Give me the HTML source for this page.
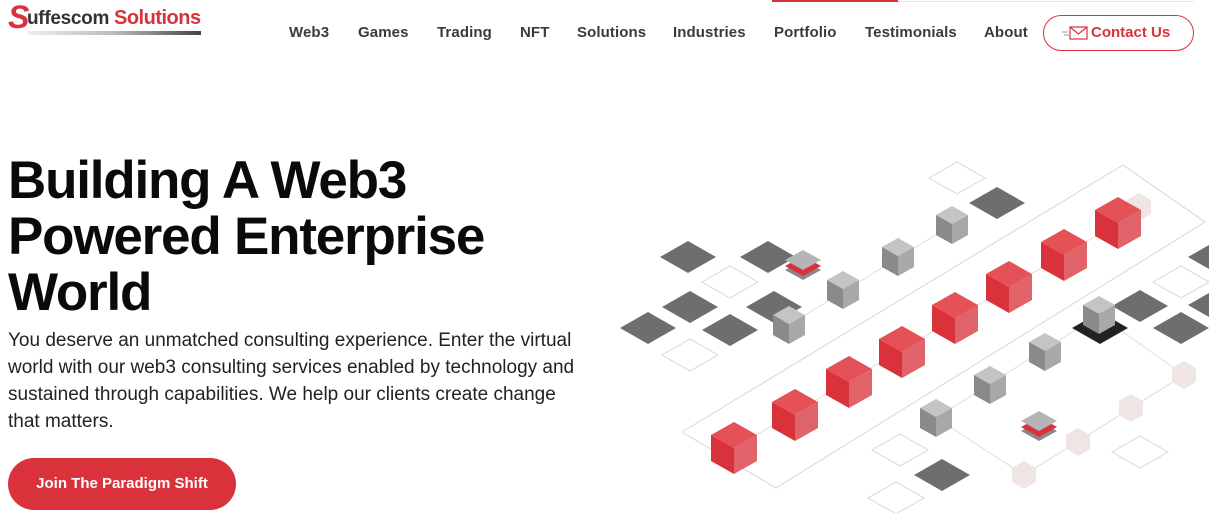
<!DOCTYPE html>
<html><head><meta charset="utf-8"><style>
*{margin:0;padding:0;box-sizing:border-box}
body{width:1209px;height:513px;overflow:hidden;background:#fff;font-family:"Liberation Sans",Arial,sans-serif;position:relative;color:#111}
.nav a{position:absolute;top:24px;font-size:15px;font-weight:bold;color:#3a3a3a;text-decoration:none;letter-spacing:0.1px}
h1{position:absolute;left:8px;top:153px;font-size:53px;line-height:56px;font-weight:bold;letter-spacing:-1.2px;color:#0a0a0a}
p{position:absolute;left:8px;top:327px;width:575px;font-size:19px;line-height:27px;color:#222}
.btn{position:absolute;left:8px;top:458px;width:228px;height:52px;border-radius:26px;background:#d9323b;color:#fff;font-weight:bold;font-size:15px;text-align:center;line-height:52px}
</style></head><body>
<div style="position:absolute;left:8px;top:2px;width:200px;height:36px">
<span style="position:absolute;left:0;top:-3px;font-size:32px;color:#d9323b;font-weight:bold;font-style:italic">S</span>
<span style="position:absolute;left:19px;top:6px;font-size:19px;color:#333;font-weight:bold;letter-spacing:-0.3px">uffescom</span>
<span style="position:absolute;left:106px;top:5px;font-size:20px;color:#d9323b;font-weight:bold;letter-spacing:-0.5px">Solutions</span>
<div style="position:absolute;left:20px;top:29px;width:173px;height:4px;background:linear-gradient(90deg,#eee,#bbb 50%,#444)"></div>
</div>
<div class="nav">
<a style="left:289px">Web3</a><a style="left:358px">Games</a><a style="left:437px">Trading</a><a style="left:520px">NFT</a><a style="left:577px">Solutions</a><a style="left:673px">Industries</a><a style="left:774px">Portfolio</a><a style="left:865px">Testimonials</a><a style="left:984px">About</a>
</div>
<div style="position:absolute;left:772px;top:0;width:126px;height:2px;background:#d9323b"></div>
<div style="position:absolute;left:898px;top:1px;width:296px;border-top:1px dotted #e8c9cc"></div>
<div style="position:absolute;left:1043px;top:15px;width:151px;height:36px;border:1.5px solid #d9323b;border-radius:18px;color:#d9323b;font-weight:bold;font-size:15px;line-height:33px;padding-left:47px">Contact Us</div>
<svg style="position:absolute;left:1061px;top:25px" width="28" height="16"><g fill="none" stroke="#d9323b" stroke-width="1.2"><rect x="9" y="2" width="17" height="12"/><path d="M9 2l8.5 7 8.5-7"/></g><path d="M1 7h6M3 10h5" stroke="#999" stroke-width="1"/></svg>
<h1>Building A Web3<br>Powered Enterprise<br>World</h1>
<p>You deserve an unmatched consulting experience. Enter the virtual world with our web3 consulting services enabled by technology and sustained through capabilities. We help our clients create change that matters.</p>
<div class="btn">Join The Paradigm Shift</div>
<svg style="position:absolute;left:0;top:0" width="1209" height="513">
<defs>
<g id="dd"><path d="M-28 0L0-16 28 0 0 16z" fill="#6d6e70"/></g>
<g id="od"><path d="M-28 0L0-16 28 0 0 16z" fill="none" stroke="#e0d4d4"/></g>
<g id="rc"><path d="M0-26L23-13 0 0-23-13z" fill="#e45258"/><path d="M-23-13L0 0 0 26-23 13z" fill="#d9323b"/><path d="M23-13L0 0 0 26 23 13z" fill="#e0636a"/></g>
<g id="gc"><path d="M0-19L16-10 0-1-16-10z" fill="#c4c4c4"/><path d="M-16-10L0-1 0 19-16 10z" fill="#8a8a8a"/><path d="M16-10L0-1 0 19 16 10z" fill="#a8a8a8"/></g>
<g id="pc"><path d="M0-14L12-7 12 7 0 14-12 7-12-7z" fill="#efe5e5"/></g>
<g id="sv"><path d="M-18 4L0-6 18 4 0 14z" fill="#888"/><path d="M-18 0L0-10 18 0 0 10z" fill="#d9323b"/><path d="M-18-6L0-16 18-6 0 4z" fill="#b5b5b5"/></g>
</defs>
<path d="M682 432L1123 165 1205 222 776 488z" fill="none" stroke="#ddd2d2"/>
<path d="M734 448L1118 223M789 325L952 225M936 418L1099 315M936 418L1024 475 1184 375M1099 315L1184 375" stroke="#e8d8d8" fill="none"/>
<use href="#od" x="957" y="178"/><use href="#od" x="730" y="282"/><use href="#od" x="690" y="355"/><use href="#od" x="1181" y="282"/><use href="#od" x="900" y="450"/><use href="#od" x="1140" y="452"/><use href="#od" x="896" y="498"/>
<use href="#dd" x="688" y="257"/><use href="#dd" x="768" y="257"/><use href="#dd" x="997" y="203"/><use href="#dd" x="690" y="307"/><use href="#dd" x="774" y="307"/><use href="#dd" x="648" y="328"/><use href="#dd" x="730" y="330"/><use href="#dd" x="1140" y="306"/><use href="#dd" x="1181" y="328"/><use href="#dd" x="942" y="475"/><use href="#dd" x="1216" y="257"/><use href="#dd" x="1216" y="305"/>
<path d="M1072 328L1100 312 1128 328 1100 344z" fill="#222"/>
<use href="#pc" x="1139" y="207"/><use href="#pc" x="1184" y="375"/><use href="#pc" x="1131" y="408"/><use href="#pc" x="1078" y="442"/><use href="#pc" x="1024" y="475"/>
<use href="#gc" x="789" y="325"/><use href="#gc" x="843" y="290"/><use href="#gc" x="898" y="257"/><use href="#gc" x="952" y="225"/><use href="#gc" x="1045" y="352"/><use href="#gc" x="990" y="385"/><use href="#gc" x="936" y="418"/><use href="#gc" x="1099" y="315"/>
<use href="#sv" x="803" y="266"/><use href="#sv" x="1039" y="427"/>
<use href="#rc" x="1118" y="223"/><use href="#rc" x="1064" y="255"/><use href="#rc" x="1009" y="287"/><use href="#rc" x="955" y="318"/><use href="#rc" x="902" y="352"/><use href="#rc" x="849" y="382"/><use href="#rc" x="795" y="415"/><use href="#rc" x="734" y="448"/>
</svg>
</body></html>
